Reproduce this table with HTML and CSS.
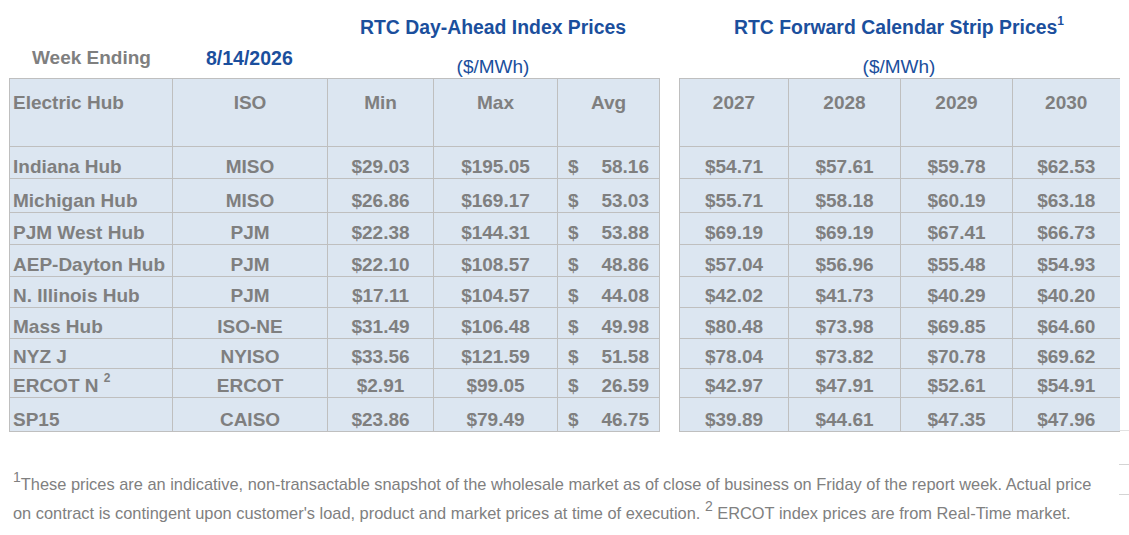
FILE: index.html
```html
<!DOCTYPE html>
<html lang="en">
<head>
<meta charset="utf-8">
<title>RTC Index and Forward Prices</title>
<link rel="stylesheet" href="styles.css">
</head>
<body>
<div class="page">
  <div class="main">
    <div class="panels">
      <section class="panel panel-a">
        <div class="head-a">
          <div class="week">
            <span class="week-label">Week Ending</span>
            <span class="week-date">8/14/2026</span>
          </div>
          <div class="titles">
            <div class="title">RTC Day-Ahead Index Prices</div>
            <div class="unit">($/MWh)</div>
          </div>
        </div>
        <table class="grid grid-a">
          <colgroup>
            <col class="c-hub"><col class="c-iso"><col class="c-min"><col class="c-max"><col class="c-avg">
          </colgroup>
          <tr class="hdr">
            <td class="left">Electric Hub</td><td>ISO</td><td>Min</td><td>Max</td><td>Avg</td>
          </tr>
          <tr class="h32"><td class="left">Indiana Hub</td><td>MISO</td><td>$29.03</td><td>$195.05</td><td class="acc"><div class="acc-in"><span>$</span><span>58.16</span></div></td></tr>
          <tr class="h34"><td class="left">Michigan Hub</td><td>MISO</td><td>$26.86</td><td>$169.17</td><td class="acc"><div class="acc-in"><span>$</span><span>53.03</span></div></td></tr>
          <tr class="h32"><td class="left">PJM West Hub</td><td>PJM</td><td>$22.38</td><td>$144.31</td><td class="acc"><div class="acc-in"><span>$</span><span>53.88</span></div></td></tr>
          <tr class="h32"><td class="left">AEP-Dayton Hub</td><td>PJM</td><td>$22.10</td><td>$108.57</td><td class="acc"><div class="acc-in"><span>$</span><span>48.86</span></div></td></tr>
          <tr class="h31"><td class="left">N. Illinois Hub</td><td>PJM</td><td>$17.11</td><td>$104.57</td><td class="acc"><div class="acc-in"><span>$</span><span>44.08</span></div></td></tr>
          <tr class="h31"><td class="left">Mass Hub</td><td>ISO-NE</td><td>$31.49</td><td>$106.48</td><td class="acc"><div class="acc-in"><span>$</span><span>49.98</span></div></td></tr>
          <tr class="h30"><td class="left">NYZ J</td><td>NYISO</td><td>$33.56</td><td>$121.59</td><td class="acc"><div class="acc-in"><span>$</span><span>51.58</span></div></td></tr>
          <tr class="h29"><td class="left">ERCOT N <sup class="cell-sup">2</sup></td><td>ERCOT</td><td>$2.91</td><td>$99.05</td><td class="acc"><div class="acc-in"><span>$</span><span>26.59</span></div></td></tr>
          <tr class="h34"><td class="left">SP15</td><td>CAISO</td><td>$23.86</td><td>$79.49</td><td class="acc"><div class="acc-in"><span>$</span><span>46.75</span></div></td></tr>
        </table>
      </section>
      <section class="panel panel-b">
        <div class="head-b">
          <div class="title">RTC Forward Calendar Strip Prices<sup class="title-sup">1</sup></div>
          <div class="unit">($/MWh)</div>
        </div>
        <table class="grid grid-b">
          <colgroup>
            <col class="c-y1"><col class="c-y2"><col class="c-y3"><col class="c-y4">
          </colgroup>
          <tr class="hdr"><td>2027</td><td>2028</td><td>2029</td><td>2030</td></tr>
          <tr class="h32"><td>$54.71</td><td>$57.61</td><td>$59.78</td><td>$62.53</td></tr>
          <tr class="h34"><td>$55.71</td><td>$58.18</td><td>$60.19</td><td>$63.18</td></tr>
          <tr class="h32"><td>$69.19</td><td>$69.19</td><td>$67.41</td><td>$66.73</td></tr>
          <tr class="h32"><td>$57.04</td><td>$56.96</td><td>$55.48</td><td>$54.93</td></tr>
          <tr class="h31"><td>$42.02</td><td>$41.73</td><td>$40.29</td><td>$40.20</td></tr>
          <tr class="h31"><td>$80.48</td><td>$73.98</td><td>$69.85</td><td>$64.60</td></tr>
          <tr class="h30"><td>$78.04</td><td>$73.82</td><td>$70.78</td><td>$69.62</td></tr>
          <tr class="h29"><td>$42.97</td><td>$47.91</td><td>$52.61</td><td>$54.91</td></tr>
          <tr class="h34"><td>$39.89</td><td>$44.61</td><td>$47.35</td><td>$47.96</td></tr>
        </table>
      </section>
    </div>
    <p class="note"><sup class="note-sup">1</sup>These prices are an indicative, non-transactable snapshot of the wholesale market as of close of business on Friday of the report week. Actual price on contract is contingent upon customer's load, product and market prices at time of execution. <sup class="note-sup">2</sup> ERCOT index prices are from Real-Time market.</p>
  </div>
  <div class="edge">
    <div class="edge-line edge-line-a"></div>
    <div class="edge-line"></div>
    <div class="edge-line"></div>
  </div>
</div>
</body>
</html>
```

FILE: styles.css
```css
html, body {
  margin: 0;
  padding: 0;
  background: #ffffff;
}

body {
  font-family: "Liberation Sans", Arial, sans-serif;
  color: #7f7f7f;
}

.page {
  display: grid;
  grid-template-columns: 1119px 10px;
  width: 1129px;
}

.panels {
  display: flex;
  gap: 20px;
  padding-left: 9px;
}

.panel-a {
  width: 650px;
}

.panel-b {
  width: 440px;
}

.head-a {
  display: grid;
  grid-template-columns: 318px 332px;
  height: 78px;
}

.week {
  display: flex;
  align-items: flex-end;
  padding-bottom: 9px;
  font-size: 19px;
  line-height: 22px;
  font-weight: bold;
}

.week-label {
  margin-left: 23px;
  width: 174px;
  color: #7f7f7f;
}

.week-date {
  color: #1b4f9d;
  font-size: 19.5px;
}

.titles,
.head-b {
  box-sizing: border-box;
  height: 78px;
  padding-top: 16px;
  display: flex;
  flex-direction: column;
  align-items: center;
  justify-content: space-between;
}

.title {
  color: #1b4f9d;
  font-size: 19.4px;
  line-height: 22px;
  font-weight: bold;
}

.title-sup {
  font-size: 12px;
  vertical-align: 9px;
  line-height: 0;
}

.unit {
  color: #1b4f9d;
  font-size: 19px;
  line-height: 22px;
}

.grid {
  border-collapse: collapse;
  table-layout: fixed;
  background: #dce6f1;
  font-size: 19px;
  line-height: 22px;
  font-weight: bold;
  color: #7f7f7f;
}

.grid-a {
  width: 650px;
}

.grid-b {
  width: 440px;
}

.c-hub { width: 163px; }
.c-iso { width: 155px; }
.c-min { width: 106px; }
.c-max { width: 124px; }
.c-avg { width: 102px; }

.c-y1 { width: 109px; }
.c-y2 { width: 112px; }
.c-y3 { width: 112px; }
.c-y4 { width: 107px; }

.grid td {
  border: 1px solid #bfbfbf;
  padding: 0;
  text-align: center;
  vertical-align: bottom;
  white-space: nowrap;
}

.grid-b td:last-child {
  border-right: none;
}

.grid td.left {
  text-align: left;
  padding-left: 3px;
}

.grid .hdr td {
  vertical-align: top;
  padding-top: 13px;
}

.hdr { height: 68px; }
.h29 { height: 29px; }
.h30 { height: 30px; }
.h31 { height: 31px; }
.h32 { height: 32px; }
.h34 { height: 34px; }

.acc-in {
  display: flex;
  justify-content: space-between;
  padding: 0 10px;
}

.cell-sup {
  font-size: 12px;
  vertical-align: 10px;
  line-height: 0;
}

.note {
  margin: 38px 0 0 0;
  padding-left: 13px;
  max-width: 1090px;
  font-size: 16.4px;
  line-height: 29px;
  color: #808080;
}

.note-sup {
  font-size: 14px;
  vertical-align: 8px;
  line-height: 0;
}

.edge {
  display: flex;
  flex-direction: column;
  padding-top: 430px;
}

.edge-line {
  height: 1px;
  background: #d4d4d4;
  margin-top: 33px;
}

.edge-line-a {
  margin-top: 0;
  background: #e2e2e2;
}

.edge-line + .edge-line + .edge-line {
  margin-top: 29px;
}
```
